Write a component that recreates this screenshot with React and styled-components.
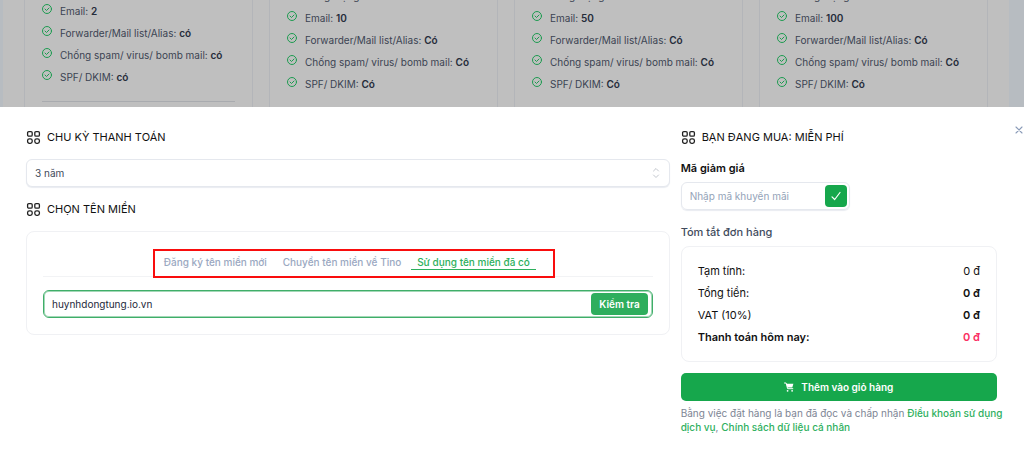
import React, { useState } from 'react';
import styled, { createGlobalStyle, css } from 'styled-components';

const GlobalStyle = createGlobalStyle`
  *, *::before, *::after {
    box-sizing: border-box;
  }

  body {
    margin: 0;
    background: #fff;
    font-family: Inter, "Liberation Sans", sans-serif;
    font-size: 10px;
    color: #0f172a;
  }

  button, input, select {
    font-family: inherit;
  }
`;

const Page = styled.div`
  display: flex;
  flex-direction: column;
  min-height: 100vh;
`;

const Plans = styled.section`
  display: flex;
  flex: 1 1 0;
  min-height: 96px;
  padding: 0 15px 0 3px;
  overflow: hidden;
  background: #b7bcc1;
`;

const PlanGrid = styled.div`
  display: grid;
  grid-template-columns: repeat(4, minmax(0, 1fr));
  grid-template-rows: minmax(0, 1fr);
  flex: 1;
  gap: 16px;
  padding: 0 21px;
  background: #bfbfbf;
`;

const PlanCard = styled.article`
  display: flex;
  flex-direction: column;
  justify-content: flex-end;
  min-height: 0;
  padding: 0 17px;
  padding-bottom: ${props => (props.$divided ? '5px' : '12px')};
  border: solid #b3b5b9;
  border-width: 0 1px;
`;

const FeatureList = styled.ul`
  margin: 0;
  padding: 0;
  list-style: none;
`;

const Feature = styled.li`
  display: flex;
  gap: 8px;
  height: 22px;
  line-height: 22px;
  font-size: 10px;
  color: #3b4352;
  white-space: nowrap;

  svg {
    flex: none;
    margin-top: 4px;
    color: #1d9b50;
  }

  strong {
    font-weight: 600;
    color: #252c3a;
  }
`;

const Divider = styled.hr`
  width: 100%;
  margin: 13px 0 0;
  border: 0;
  border-top: 1px solid #a9abaf;
`;

const Drawer = styled.main`
  position: relative;
  display: grid;
  grid-template-columns: 2fr 1fr;
  padding: 19px 22px 16px 20px;
  background: #fff;
`;

const Column = styled.div`
  min-width: 0;
  padding: 0 5px 0 6px;
`;

const CloseButton = styled.button`
  position: absolute;
  top: 16px;
  right: -2px;
  display: flex;
  padding: 0;
  border: 0;
  background: none;
  color: #8a9bb8;
  cursor: pointer;
`;

const Heading = styled.h2`
  display: flex;
  align-items: center;
  gap: 6px;
  height: 22px;
  margin: 0;
  font-size: 11px;
  font-weight: 400;
  color: #111;
`;

const SelectBox = styled.div`
  position: relative;
  margin: 11px 0;

  svg {
    position: absolute;
    top: 7px;
    right: 7px;
    color: #c3c7ce;
    pointer-events: none;
  }
`;

const Select = styled.select`
  display: block;
  width: 100%;
  height: 28px;
  padding: 0 8px;
  border: 1px solid #e5e8ee;
  border-radius: 6px;
  box-shadow: 0 1px 1px #e9ecf1;
  background: #fff;
  font-size: 10px;
  color: #3f4a5b;
  appearance: none;
`;

const Panel = styled.div`
  margin-top: 11px;
  padding: 17px 16px 16px;
  border: 1px solid #f0f1f4;
  border-radius: 8px;
`;

const TabBar = styled.div`
  display: flex;
  justify-content: center;
  margin-bottom: 13px;
  border-bottom: 1px solid #f2f3f5;
`;

const TabFrame = styled.div`
  display: flex;
  justify-content: space-between;
  width: 402px;
  height: 29px;
  margin: 0 0 -2px 12px;
  padding: 3px 17px 6px 3px;
  border: 2px solid #f90d0d;
`;

const Tab = styled.button`
  padding: 0 6px;
  border: 0;
  border-bottom: 1px solid transparent;
  background: none;
  font-size: 10px;
  font-weight: 500;
  color: #9aa8c1;
  white-space: nowrap;
  cursor: pointer;

  ${props => props.$active && css`
    border-color: #2daf5c;
    color: #2daf5c;
  `}
`;

const DomainField = styled.form`
  display: flex;
  align-items: center;
  height: 28px;
  padding: 0 4px 0 0;
  border: 1px solid #3fae69;
  border-radius: 6px;
  box-shadow: inset 0 0 0 1px #a3d8b7;
`;

const Input = styled.input`
  flex: 1;
  min-width: 0;
  padding: 0 8px;
  border: 0;
  outline: none;
  background: transparent;
  font-size: 10px;
  color: #1e293b;

  &::placeholder {
    color: #94a3b8;
    opacity: 1;
  }
`;

const Button = styled.button`
  display: flex;
  align-items: center;
  justify-content: center;
  gap: 7px;
  height: 22px;
  padding: 0 8px;
  border: 0;
  border-radius: 4px;
  background: #2eae5d;
  font-size: 10px;
  font-weight: 600;
  color: #fff;
  cursor: pointer;
`;

const ApplyButton = styled(Button)`
  width: 22px;
  padding: 0;
  background: #16a74c;
`;

const OrderButton = styled(Button)`
  width: 100%;
  height: 28px;
  margin-top: 11px;
  border-radius: 5px;
  background: #16a74c;
`;

const Label = styled.label`
  display: block;
  margin: 12px 0 6px;
  font-size: 11px;
  font-weight: 600;
  line-height: 16px;
  color: #111;
`;

const CouponField = styled.form`
  display: flex;
  align-items: center;
  width: 169px;
  height: 28px;
  padding-right: 2px;
  border: 1px solid #e5e8ee;
  border-radius: 6px;
  box-shadow: 0 1px 1px #e9ecf1;
`;

const SummaryTitle = styled.h3`
  margin: 14px 0 6px;
  font-size: 11px;
  font-weight: 500;
  line-height: 16px;
  color: #414b5d;
`;

const Summary = styled.dl`
  margin: 0;
  padding: 13px 16px;
  border: 1px solid #f0f1f4;
  border-radius: 8px;
`;

const SummaryRow = styled.div`
  display: flex;
  justify-content: space-between;
  font-size: 11px;
  line-height: 22px;
  color: #111;
  font-weight: ${props => (props.$total ? 600 : 400)};

  dd {
    margin: 0;
    font-weight: ${props => (props.$strong ? 600 : 400)};
    color: ${props => (props.$total ? '#fb2f62' : '#111')};
  }
`;

const Terms = styled.p`
  margin: 5px -12px 0 0;
  font-size: 10px;
  line-height: 14px;
  color: #7d8594;

  a {
    font-weight: 500;
    color: #2eb05e;
    text-decoration: none;
  }
`;

const CheckCircle = () => (
  <svg width="10" height="10" viewBox="0 0 20 20" fill="none" stroke="currentColor" strokeWidth="2" strokeLinecap="round" strokeLinejoin="round">
    <circle cx="10" cy="10" r="9" />
    <path d="M6 10l3 3 5-5" />
  </svg>
);

const GridIcon = () => (
  <svg width="15" height="15" viewBox="0 0 15 15" fill="none" stroke="#222" strokeWidth="1.3">
    <rect x="1.6" y="1.6" width="4.6" height="4.6" rx="1.2" />
    <rect x="8.8" y="1.6" width="4.6" height="4.6" rx="1.2" />
    <rect x="1.6" y="8.8" width="4.6" height="4.6" rx="1.8" />
    <rect x="8.8" y="8.8" width="4.6" height="4.6" rx="1.8" />
  </svg>
);

const ChevronUpDown = () => (
  <svg width="14" height="14" viewBox="0 0 14 14" fill="none" stroke="currentColor" strokeLinecap="round" strokeLinejoin="round">
    <path d="M4.5 5L7 2.5 9.5 5M4.5 9L7 11.5 9.5 9" />
  </svg>
);

const CheckIcon = () => (
  <svg width="12" height="12" viewBox="0 0 12 12" fill="none" stroke="currentColor" strokeWidth="1.2" strokeLinecap="round" strokeLinejoin="round">
    <path d="M2 6.8l2.7 2.7L10 2.5" />
  </svg>
);

const CloseIcon = () => (
  <svg width="14" height="14" viewBox="0 0 14 14" fill="none" stroke="currentColor" strokeWidth="1.1" strokeLinecap="round">
    <path d="M4 4l6 6M10 4l-6 6" />
  </svg>
);

const CartIcon = () => (
  <svg width="10" height="10" viewBox="0 0 10 10" fill="none">
    <path d="M.5 1h1.6l1.5 5.7h5.2" stroke="currentColor" strokeLinecap="round" strokeLinejoin="round" />
    <path d="M2.4 1.7h7L8.3 5.6H3.4z" fill="currentColor" />
    <circle cx="3.6" cy="8.8" r="0.9" fill="currentColor" />
    <circle cx="8.1" cy="8.8" r="0.9" fill="currentColor" />
  </svg>
);

const plans = [
  { storage: '1GB', email: '2', support: 'có', divided: true },
  { storage: '5GB', email: '10', support: 'Có' },
  { storage: '10GB', email: '50', support: 'Có' },
  { storage: '20GB', email: '100', support: 'Có' }
];

const tabs = ['Đăng ký tên miền mới', 'Chuyển tên miền về Tino', 'Sử dụng tên miền đã có'];

const summary = [
  { label: 'Tạm tính:', value: '0 đ' },
  { label: 'Tổng tiền:', value: '0 đ', strong: true },
  { label: 'VAT (10%)', value: '0 đ', strong: true },
  { label: 'Thanh toán hôm nay:', value: '0 đ', strong: true, total: true }
];

const Plan = ({ plan }) => {
  const features = [
    ['Dung lượng', plan.storage],
    ['Email', plan.email],
    ['Forwarder/Mail list/Alias', plan.support],
    ['Chống spam/ virus/ bomb mail', plan.support],
    ['SPF/ DKIM', plan.support]
  ];

  return (
    <PlanCard $divided={plan.divided}>
      <FeatureList>
        {features.map(([name, value]) => (
          <Feature key={name}>
            <CheckCircle />
            <span>{name}: <strong>{value}</strong></span>
          </Feature>
        ))}
      </FeatureList>
      {plan.divided && <Divider />}
    </PlanCard>
  );
};

const App = () => {
  const [activeTab, setActiveTab] = useState(2);
  const [domain, setDomain] = useState('huynhdongtung.io.vn');
  const [coupon, setCoupon] = useState('');

  const handleSubmit = (e) => e.preventDefault();

  return (
    <Page>
      <GlobalStyle />
      <Plans>
        <PlanGrid>
          {plans.map(plan => <Plan key={plan.email} plan={plan} />)}
        </PlanGrid>
      </Plans>

      <Drawer>
        <Column>
          <Heading><GridIcon /><label htmlFor="cycle">CHU KỲ THANH TOÁN</label></Heading>
          <SelectBox>
            <Select id="cycle" defaultValue="3">
              <option value="1">1 năm</option>
              <option value="2">2 năm</option>
              <option value="3">3 năm</option>
            </Select>
            <ChevronUpDown />
          </SelectBox>

          <Heading><GridIcon /><label htmlFor="domain">CHỌN TÊN MIỀN</label></Heading>
          <Panel>
            <TabBar>
              <TabFrame role="tablist">
                {tabs.map((tab, index) => (
                  <Tab
                    key={tab}
                    type="button"
                    role="tab"
                    aria-selected={index === activeTab}
                    $active={index === activeTab}
                    onClick={() => setActiveTab(index)}
                  >
                    {tab}
                  </Tab>
                ))}
              </TabFrame>
            </TabBar>
            <DomainField onSubmit={handleSubmit}>
              <Input id="domain" value={domain} onChange={(e) => setDomain(e.target.value)} />
              <Button type="submit">Kiểm tra</Button>
            </DomainField>
          </Panel>
        </Column>

        <Column>
          <Heading><GridIcon />BẠN ĐANG MUA: MIỄN PHÍ</Heading>
          <Label htmlFor="coupon">Mã giảm giá</Label>
          <CouponField onSubmit={handleSubmit}>
            <Input
              id="coupon"
              value={coupon}
              onChange={(e) => setCoupon(e.target.value)}
              placeholder="Nhập mã khuyến mãi"
            />
            <ApplyButton type="submit" aria-label="Áp dụng"><CheckIcon /></ApplyButton>
          </CouponField>

          <SummaryTitle>Tóm tắt đơn hàng</SummaryTitle>
          <Summary>
            {summary.map(row => (
              <SummaryRow key={row.label} $strong={row.strong} $total={row.total}>
                <dt>{row.label}</dt>
                <dd>{row.value}</dd>
              </SummaryRow>
            ))}
          </Summary>
          <OrderButton type="button"><CartIcon />Thêm vào giỏ hàng</OrderButton>
          <Terms>
            Bằng việc đặt hàng là bạn đã đọc và chấp nhận <a href="#terms">Điều khoản sử dụng dịch vụ</a>, <a href="#privacy">Chính sách dữ liệu cá nhân</a>
          </Terms>
        </Column>

        <CloseButton type="button" aria-label="Đóng"><CloseIcon /></CloseButton>
      </Drawer>
    </Page>
  );
};

export default App;
